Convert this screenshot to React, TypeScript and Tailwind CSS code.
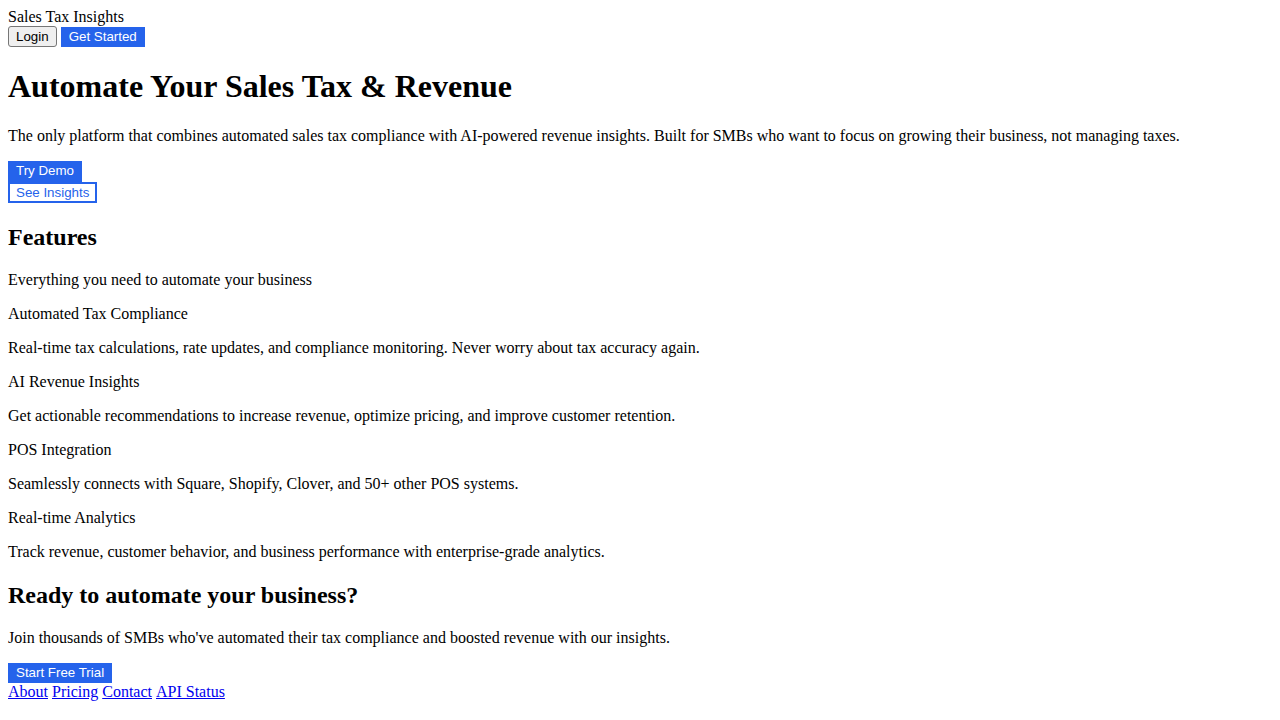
const features = [
  {
    title: "Automated Tax Compliance",
    text: "Real-time tax calculations, rate updates, and compliance monitoring. Never worry about tax accuracy again.",
  },
  {
    title: "AI Revenue Insights",
    text: "Get actionable recommendations to increase revenue, optimize pricing, and improve customer retention.",
  },
  {
    title: "POS Integration",
    text: "Seamlessly connects with Square, Shopify, Clover, and 50+ other POS systems.",
  },
  {
    title: "Real-time Analytics",
    text: "Track revenue, customer behavior, and business performance with enterprise-grade analytics.",
  },
];

const btn = "font-['Liberation_Sans',Arial,sans-serif] text-[13.33px] leading-[normal] h-[20px] px-2 flex items-center";

export default function App() {
  return (
    <div className="min-h-screen bg-white p-2 text-black font-['Liberation_Serif','Times_New_Roman',serif] text-base leading-[18px]">
      {/* Header */}
      <header>
        <div>Sales Tax Insights</div>
        <div className="flex items-center gap-1">
          <button className="font-['Liberation_Sans',Arial,sans-serif] text-[13.33px] leading-[normal] h-[21px] px-[7px] bg-[#efefef] border border-[#767676] rounded-[3px] text-black">
            Login
          </button>
          <button className={`${btn} bg-[#2563eb] text-white`}>Get Started</button>
        </div>
      </header>

      {/* Hero */}
      <section>
        <h1 className="text-[32px] leading-[37px] font-bold my-[21.44px]">Automate Your Sales Tax &amp; Revenue</h1>
        <p className="my-4">
          The only platform that combines automated sales tax compliance with AI-powered revenue insights. Built for SMBs who want to focus on growing their business, not managing taxes.
        </p>
        <div className="flex flex-col items-start">
          <button className="font-['Liberation_Sans',Arial,sans-serif] text-[13.33px] leading-[normal] h-[21px] px-2 pb-px flex items-center bg-[#2563eb] text-white">
            Try Demo
          </button>
          <button className="font-['Liberation_Sans',Arial,sans-serif] text-[13.33px] leading-[normal] h-[21px] px-[6px] flex items-center border-2 border-[#2563eb] text-[#2563eb] bg-white">
            See Insights
          </button>
        </div>
      </section>

      {/* Features */}
      <section>
        <h2 className="text-2xl leading-[28px] font-bold my-[19.92px]">Features</h2>
        <p className="my-4">Everything you need to automate your business</p>
        {features.map((f) => (
          <div key={f.title}>
            <p className="my-4">{f.title}</p>
            <p className="my-4">{f.text}</p>
          </div>
        ))}
      </section>

      {/* CTA */}
      <section>
        <h2 className="text-2xl leading-[28px] font-bold my-[19.92px]">Ready to automate your business?</h2>
        <p className="my-4">
          Join thousands of SMBs who've automated their tax compliance and boosted revenue with our insights.
        </p>
        <button className={`${btn} bg-[#2563eb] text-white`}>Start Free Trial</button>
      </section>

      <footer className="flex gap-1 text-[#0000ee]">
        <a href="#" className="underline">About</a>
        <a href="#" className="underline">Pricing</a>
        <a href="#" className="underline">Contact</a>
        <a href="#" className="underline">API Status</a>
      </footer>
    </div>
  );
}
